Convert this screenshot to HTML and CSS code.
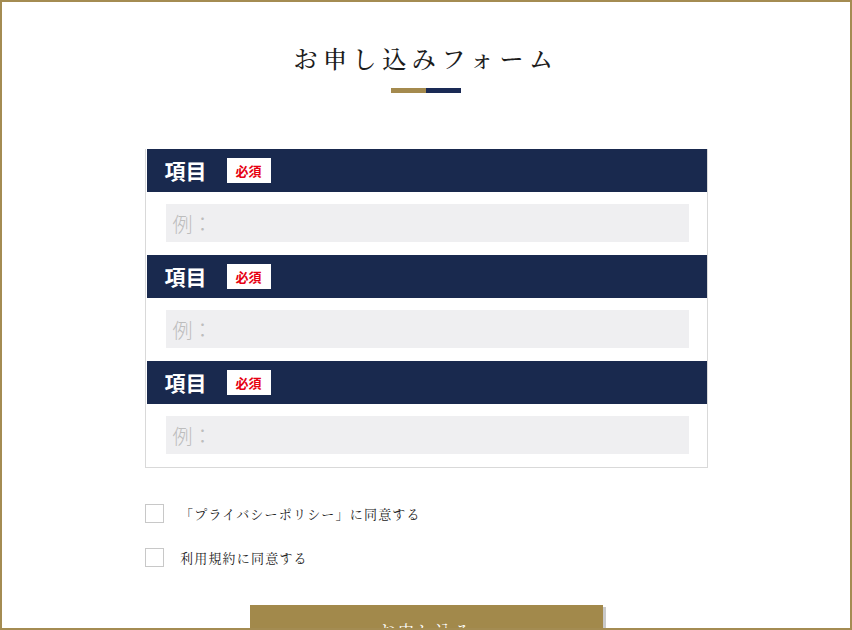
FILE: index.html
```html
<!DOCTYPE html>
<html lang="ja">
<head>
  <meta charset="UTF-8">
  <title>お申し込みフォーム</title>
  <link rel="stylesheet" href="styles.css">
</head>
<body>
<div class="page">
  <!-- title -->
  <h1 class="title">お申し込みフォーム</h1>
  <div class="title-bar"><span class="bar-gold"></span><span class="bar-navy"></span></div>

  <!-- form fields -->
  <div class="form-box">
    <div class="field">
      <div class="field-head"><span class="field-label">項目</span><span class="required">必須</span></div>
      <div class="field-body"><div class="input">例：</div></div>
    </div>
    <div class="field">
      <div class="field-head"><span class="field-label">項目</span><span class="required">必須</span></div>
      <div class="field-body"><div class="input">例：</div></div>
    </div>
    <div class="field">
      <div class="field-head"><span class="field-label">項目</span><span class="required">必須</span></div>
      <div class="field-body"><div class="input">例：</div></div>
    </div>
  </div>

  <!-- agreements -->
  <div class="agree-list">
    <label class="agree"><span class="check"></span><span class="agree-text">「プライバシーポリシー」に同意する</span></label>
    <label class="agree"><span class="check"></span><span class="agree-text">利用規約に同意する</span></label>
  </div>

  <div class="submit-wrap">
    <div class="submit">お申し込み</div>
  </div>
</div>
</body>
</html>
```

FILE: styles.css
```css
body {
    margin: 0;
    font-family: "Noto Sans CJK JP", "Noto Sans", sans-serif;
    color: #222;
    background: #fff;
}
.page {
    box-sizing: border-box;
    height: 630px;
    border: 2px solid #a48c52;
    overflow: hidden;
}
.title {
    margin: 0;
    padding-top: 36px;
    text-align: center;
    font-family: "Noto Serif CJK JP", "Noto Sans CJK JP", serif;
    font-size: 24px;
    font-weight: 500;
    line-height: 40px;
    letter-spacing: 5.6px;
    color: #1c1c1c;
}
.title-bar {
    display: flex;
    justify-content: center;
    margin-top: 10px;
}
.bar-gold, .bar-navy {
    width: 35px;
    height: 5px;
}
.bar-gold { background: #a48a4e; }
.bar-navy { background: #1a2a55; }

.form-box {
    width: 560px;
    margin: 56px auto 0;
    padding-left: 1px;
    border: 1px solid #d9d9d9;
    border-top: none;
}
.field-head {
    display: flex;
    align-items: center;
    height: 43px;
    padding-left: 18px;
    background: #19294e;
}
.field-label {
    color: #fff;
    font-size: 21px;
    font-weight: 700;
    line-height: 1;
}
.required {
    margin-left: 20px;
    height: 25px;
    padding: 0 9px;
    display: flex;
    align-items: center;
    background: #fff;
    color: #e60012;
    font-size: 13px;
    font-weight: 700;
}
.field-body {
    padding: 12px 18px 13px 19px;
}
.input {
    height: 38px;
    padding-left: 7px;
    display: flex;
    align-items: center;
    background: #efeff1;
    color: #bdbdbd;
    font-size: 20px;
    font-weight: 300;
}

.agree-list {
    width: 562px;
    margin: 36px auto 0;
    display: flex;
    flex-direction: column;
    gap: 25px;
}
.agree {
    display: flex;
    align-items: center;
    height: 19px;
}
.check {
    box-sizing: border-box;
    width: 19px;
    height: 19px;
    border: 1px solid #c8c8c8;
    background: #fff;
}
.agree-text {
    margin-left: 16px;
    font-family: "Noto Serif CJK JP", "Noto Sans CJK JP", serif;
    font-size: 13px;
    letter-spacing: 1.2px;
    color: #222;
}

.submit-wrap {
    display: flex;
    justify-content: center;
    margin-top: 38px;
}
.submit {
    width: 353px;
    height: 50px;
    display: flex;
    align-items: center;
    justify-content: center;
    background: #a2894b;
    box-shadow: 3px 2px 0 #c9c9c9;
    color: #fff;
    font-family: "Noto Serif CJK JP", "Noto Sans CJK JP", serif;
    font-size: 17px;
    letter-spacing: 2px;
}
```
